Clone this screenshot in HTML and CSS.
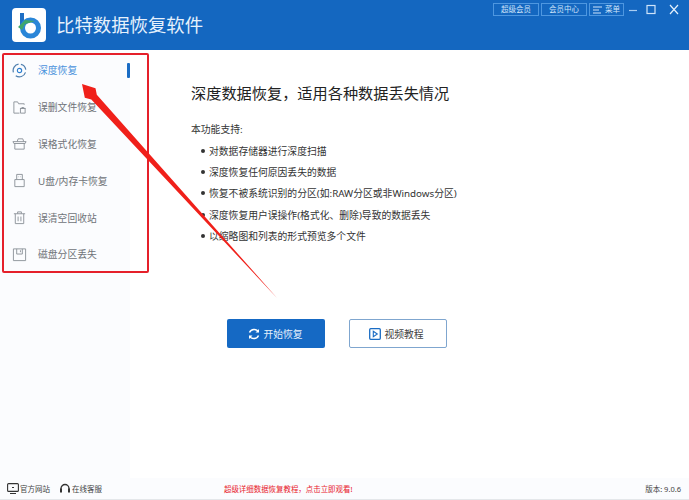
FILE: index.html
```html
<!DOCTYPE html>
<html lang="zh">
<head>
<meta charset="utf-8">
<title>比特数据恢复软件</title>
<link rel="stylesheet" href="styles.css">
</head>
<body>
<div class="app">
  <header class="topbar">
    <div class="logo">
      <svg viewBox="0 0 34 34" width="34" height="34">
        <path d="M10 5v15" stroke="#1f6fc4" stroke-width="4" fill="none"/>
        <circle cx="18.500" cy="20" r="8" fill="none" stroke="#2a86d8" stroke-width="5"/>
        <path d="M6 19l7-7 10 1-6 2-4 1-3 6z" fill="#3fa66a"/>
      </svg>
    </div>
    <div class="brand">比特数据恢复软件</div>
    <div class="top-actions">
      <span class="top-btn">超级会员</span>
      <span class="top-btn">会员中心</span>
      <span class="top-btn menu-btn">
        <svg viewBox="0 0 10 8" width="10" height="8"><path d="M0 1h9M0 4h6M0 7h8" stroke="#cfe4fa" stroke-width="1" fill="none"/></svg>菜单
      </span>
      <div class="win-controls">
        <svg viewBox="0 0 12 12" width="12" height="12"><path d="M1 6.500h8" stroke="#a9cdf2" stroke-width="1.200"/></svg>
        <svg viewBox="0 0 12 12" width="12" height="12"><rect x="2" y="1.500" width="8" height="8" fill="none" stroke="#cfe4fa" stroke-width="1.200"/></svg>
        <svg class="win-close" viewBox="0 0 12 12" width="12" height="12"><path d="M2 1l8 9M10 1l-8 9" stroke="#e3f0fc" stroke-width="1.200" fill="none"/></svg>
      </div>
    </div>
  </header>
  <div class="body">
    <nav class="sidebar">
      <div class="nav-item active">
        <svg class="nav-icon" viewBox="0 0 16 16"><path d="M1.500 10A6.800 6.800 0 0 1 7 1.300M9.500 1.400A6.800 6.800 0 0 1 14.700 7M14.400 10A6.800 6.800 0 0 1 4 13.500" fill="none" stroke="#4f7fae" stroke-width="1.300"/><circle cx="8" cy="8" r="2.300" fill="none" stroke="#2e7fd0" stroke-width="1.200"/></svg>
        <span>深度恢复</span><i class="nav-mark"></i>
      </div>
      <div class="nav-item">
        <svg class="nav-icon" viewBox="0 0 16 16"><path d="M13 5V4H7L6 2H2v12h6" fill="none" stroke="#8d939a"/><path d="M9 9h5v5H9zM8.500 9h6M10.500 9V8h2v1" fill="none" stroke="#8d939a"/></svg>
        <span>误删文件恢复</span>
      </div>
      <div class="nav-item">
        <svg class="nav-icon" viewBox="0 0 16 16"><path d="M1 6h14l-1 2H2zM3 8v6h10V8M5.500 6l1-3h5l1 3" fill="none" stroke="#8d939a"/></svg>
        <span>误格式化恢复</span>
      </div>
      <div class="nav-item">
        <svg class="nav-icon" viewBox="0 0 16 16"><path d="M5 7V1.500h6V7M3 7h10v7.500H3z" fill="none" stroke="#8d939a"/><path d="M7 4h.500M9 4h.500" stroke="#8d939a"/></svg>
        <span>U盘/内存卡恢复</span>
      </div>
      <div class="nav-item">
        <svg class="nav-icon" viewBox="0 0 16 16"><path d="M2 4h12M6 4V2h4v2M3.500 4v10.500h9V4M6.500 7v5M9.500 7v5" fill="none" stroke="#8d939a"/></svg>
        <span>误清空回收站</span>
      </div>
      <div class="nav-item">
        <svg class="nav-icon" viewBox="0 0 16 16"><path d="M1.500 2h13v12.500h-13zM5 2v5.500h6V2" fill="none" stroke="#8d939a"/><path d="M9 3.500v2" stroke="#8d939a"/></svg>
        <span>磁盘分区丢失</span>
      </div>
    </nav>
    <main class="content">
      <h1 class="heading">深度数据恢复，适用各种数据丢失情况</h1>
      <p class="intro">本功能支持:</p>
      <ul class="features">
        <li>对数据存储器进行深度扫描</li>
        <li>深度恢复任何原因丢失的数据</li>
        <li>恢复不被系统识别的分区(如:RAW分区或非Windows分区)</li>
        <li>深度恢复用户误操作(格式化、删除)导致的数据丢失</li>
        <li>以缩略图和列表的形式预览多个文件</li>
      </ul>
      <div class="actions">
        <button class="btn primary">
          <svg viewBox="0 0 12 12" width="12" height="12"><path d="M10.500 4A5 5 0 0 0 1.500 4.500M1.500 8A5 5 0 0 0 10.500 7.500" fill="none" stroke="#fff" stroke-width="1.500"/><path d="M11 1v3.500H7.500zM1 11V7.500h3.500z" fill="#fff"/></svg>
          开始恢复
        </button>
        <button class="btn secondary">
          <svg viewBox="0 0 12 12" width="12" height="12"><rect x=".700" y=".700" width="10.600" height="10.600" rx="1" fill="none" stroke="#1a6cc4" stroke-width="1.300"/><path d="M4.300 3.300l4 2.700-4 2.700z" fill="none" stroke="#1a6cc4" stroke-width="1.100"/></svg>
          视频教程
        </button>
      </div>
    </main>
  </div>
  <footer class="footer">
    <span class="foot-link">
      <svg viewBox="0 0 12 11" width="12" height="11"><rect x=".600" y=".600" width="10.800" height="7.800" rx="1" fill="none" stroke="#333" stroke-width="1.100"/><path d="M3 10.500h6M5 4.500h2" stroke="#333"/></svg>
      官方网站
    </span>
    <span class="foot-link">
      <svg viewBox="0 0 12 12" width="12" height="12"><path d="M2 7V5.500a4 4 0 0 1 8 0V7" fill="none" stroke="#333" stroke-width="1.300"/><rect x="1" y="5.500" width="2" height="4" fill="#333"/><rect x="9" y="5.500" width="2" height="4" fill="#333"/></svg>
      在线客服
    </span>
    <span class="foot-promo">超级详细数据恢复教程，点击立即观看!</span>
    <span class="foot-version">版本: 9.0.6</span>
  </footer>
  <div class="highlight"></div>
  <svg class="arrow" viewBox="0 0 689 500" width="689" height="500">
    <path d="M82 84L95.500 88.300 96.800 94.700 277 298 91.300 99.500 84.800 97.700z" fill="#f0201a"/>
  </svg>
</div>
</body>
</html>
```

FILE: styles.css
```css
* { box-sizing: border-box; }
html, body { margin: 0; padding: 0; }
body {
  width: 689px;
  height: 500px;
  overflow: hidden;
  background: #fff;
  font-family: "Noto Sans", "Noto Sans CJK SC", "Liberation Sans", sans-serif;
  color: #333;
}
.app {
  position: relative;
  width: 689px;
  height: 500px;
  display: flex;
  flex-direction: column;
}
.topbar {
  height: 50px;
  flex: none;
  background: #1467c0;
  display: flex;
  align-items: flex-start;
  padding: 8px 0 0 12px;
}
.logo {
  width: 34px;
  height: 34px;
  background: #fff;
  border-radius: 4px;
  flex: none;
}
.brand {
  margin-left: 10px;
  font-size: 18.400px;
  line-height: 34px;
  color: #e6f1fc;
  white-space: nowrap;
}
.top-actions {
  margin-left: auto;
  margin-top: -5px;
  display: flex;
  align-items: center;
  gap: 2px;
  padding-right: 9px;
}
.top-btn {
  height: 13px;
  width: 46px;
  border: 1px solid #4e97e0;
  font-size: 7.500px;
  line-height: 11px;
  text-align: center;
  color: #cfe4fa;
  white-space: nowrap;
}
.menu-btn {
  width: 35px;
  display: flex;
  align-items: center;
  justify-content: center;
  gap: 2px;
}
.win-controls {
  display: flex;
  align-items: center;
  gap: 5px;
  margin-left: 2px;
}
.win-close { margin-left: 6px; }
.body {
  flex: 1;
  display: flex;
  min-height: 0;
}
.sidebar {
  width: 130px;
  flex: none;
  background: #fbfcfe;
  padding-top: 2px;
}
.nav-item {
  height: 36.800px;
  display: flex;
  align-items: center;
  padding-left: 12px;
  font-size: 9.800px;
  color: #6f7378;
  white-space: nowrap;
}
.nav-item.active { color: #4a92dc; }
.nav-icon {
  width: 15px;
  height: 15px;
  margin-right: 11px;
  flex: none;
}
.nav-mark {
  width: 3px;
  height: 15px;
  border-radius: 1px;
  background: #1a6cc4;
  margin-left: auto;
}
.content {
  flex: 1;
  padding: 32px 0 0 61px;
  color: #333;
}
.heading {
  margin: 0;
  font-size: 15.200px;
  line-height: 22px;
  font-weight: 400;
  color: #222;
  white-space: nowrap;
}
.intro {
  margin: 19px 0 0;
  font-size: 9.800px;
  line-height: 14px;
}
.features {
  padding: 0 0 0 18px;
  list-style: none;
  font-size: 9.800px;
  line-height: 21.200px;
  margin: 4px 0 0;
}
.features li { position: relative; white-space: nowrap; }
.features li::before {
  content: "";
  position: absolute;
  left: -8px;
  top: 8px;
  width: 4px;
  height: 4px;
  border-radius: 50%;
  background: #333;
}
.actions {
  display: flex;
  gap: 24px;
  margin-top: 72px;
  margin-left: 36px;
}
.btn {
  width: 98px;
  height: 29px;
  border-radius: 2px;
  display: flex;
  align-items: center;
  justify-content: center;
  gap: 3px;
  font-family: inherit;
  font-size: 9.800px;
  padding: 0;
}
.primary { background: #1569c4; color: #e6f1fc; border: 0; padding-right: 1px; }
.secondary { background: #fff; color: #444; border: 1px solid #7fa6cf; padding-right: 3px; }
.footer {
  height: 22px;
  flex: none;
  background: #fbfcfe;
  border-bottom: 1px solid #e4e7ea;
  display: flex;
  align-items: center;
  font-size: 7.500px;
  color: #444;
  padding-left: 7px;
  white-space: nowrap;
}
.foot-link {
  display: flex;
  align-items: center;
  gap: 1px;
  margin-right: 9px;
}
.foot-promo {
  margin-left: 113px;
  font-size: 7.450px;
  color: #e8202c;
}
.foot-version { margin-left: auto; margin-right: 8px; }
.highlight {
  position: absolute;
  left: 2px;
  top: 53px;
  width: 147px;
  height: 220px;
  border: 2px solid #e5202a;
  border-radius: 2px;
  pointer-events: none;
}
.arrow {
  position: absolute;
  left: 0;
  top: 0;
  pointer-events: none;
}
```
